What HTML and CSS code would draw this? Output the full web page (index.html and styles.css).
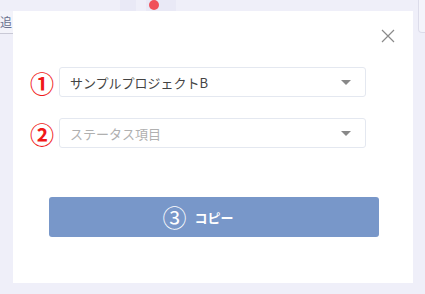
FILE: index.html
```html
<!DOCTYPE html>
<html lang="ja">
<head>
    <meta charset="UTF-8">
    <title>コピー</title>
    <link rel="stylesheet" href="styles.css">
</head>
<body>
    <!-- 背景ページ -->
    <div class="page">
        <div class="tabs">
            <div class="tab tab-a"></div>
            <div class="tab tab-b"><span class="dot"></span></div>
        </div>
        <div class="side">
            <span class="side-label">追</span>
        </div>
        <div class="card-edge"></div>
    </div>

    <!-- モーダル -->
    <div class="modal">
        <button class="close" aria-label="閉じる">
            <svg width="14" height="14" viewBox="0 0 14 14"><path d="M1 1L13 13M13 1L1 13" stroke="#8a8a8a" stroke-width="1.2" fill="none"/></svg>
        </button>
        <div class="form">
            <div class="row">
                <span class="num">①</span>
                <div class="select">
                    <span class="value">サンプルプロジェクトB</span>
                    <span class="arrow"></span>
                </div>
            </div>
            <div class="row">
                <span class="num">②</span>
                <div class="select">
                    <span class="value placeholder">ステータス項目</span>
                    <span class="arrow"></span>
                </div>
            </div>
        </div>
        <button class="copy-btn"><span class="btn-num">③</span><span class="btn-text">コピー</span></button>
    </div>
</body>
</html>
```

FILE: styles.css
```css
:root {
    --bg: #efeff9;
    --red: #f0505a;
    --btn: #7897c9;
    --border: #e4e8f0;
}

* {
    margin: 0;
    padding: 0;
    box-sizing: border-box;
}

body {
    width: 425px;
    height: 294px;
    overflow: hidden;
    background: var(--bg);
    font-family: "Noto Sans CJK JP", "Noto Sans", sans-serif;
    position: relative;
}

/* ========== 背景 ========== */
.page {
    height: 100%;
}

.tabs {
    display: flex;
    height: 11px;
    padding-left: 120px;
    gap: 10px;
}

.tab {
    height: 11px;
    background: #e9e9f6;
}

.tab-a { width: 16px; }

.tab-b {
    width: 30px;
    position: relative;
}

.dot {
    position: absolute;
    left: 3px;
    top: 0;
    width: 10px;
    height: 10px;
    border-radius: 50%;
    background: var(--red);
}

.side {
    width: 13px;
    height: 23px;
    border-bottom: 1px solid #c9c9d6;
    background: #f3f3fa;
}

.side-label {
    display: block;
    font-size: 12px;
    line-height: 22px;
    color: #6a7290;
}

.card-edge {
    position: absolute;
    right: -5px;
    top: 0;
    width: 12px;
    height: 33px;
    border: 1px solid #dcdcea;
    border-top: none;
    border-radius: 0 0 0 4px;
    background: #f4f4fb;
}

/* ========== モーダル ========== */
.modal {
    position: absolute;
    left: 13px;
    top: 11px;
    width: 400px;
    height: 272px;
    background: #fff;
    padding: 56px 47px 0 12px;
}

.close {
    position: absolute;
    top: 18px;
    right: 18px;
    width: 14px;
    height: 14px;
    border: none;
    background: none;
    display: flex;
}

.form {
    display: flex;
    flex-direction: column;
    gap: 21px;
}

.row {
    display: flex;
    align-items: center;
}

.num {
    width: 34px;
    font-size: 24px;
    font-weight: bold;
    line-height: 29px;
    color: #f01818;
    text-align: center;
}

.select {
    flex: 1;
    height: 30px;
    border: 1px solid var(--border);
    border-radius: 3px;
    display: flex;
    align-items: center;
    padding: 0 14px 0 10px;
}

.value {
    flex: 1;
    font-size: 13px;
    color: #444;
}

.placeholder {
    color: #b0b0b0;
}

.arrow {
    width: 0;
    height: 0;
    border-left: 5px solid transparent;
    border-right: 5px solid transparent;
    border-top: 5px solid #888;
}

.copy-btn {
    display: flex;
    align-items: center;
    justify-content: center;
    gap: 8px;
    width: 330px;
    height: 40px;
    margin: 49px 0 0 24px;
    padding-right: 32px;
    border: none;
    border-radius: 3px;
    background: var(--btn);
    color: #fff;
    font-family: inherit;
}

.btn-num {
    font-size: 24px;
    line-height: 1;
}

.btn-text {
    font-size: 13px;
    font-weight: bold;
}
```
